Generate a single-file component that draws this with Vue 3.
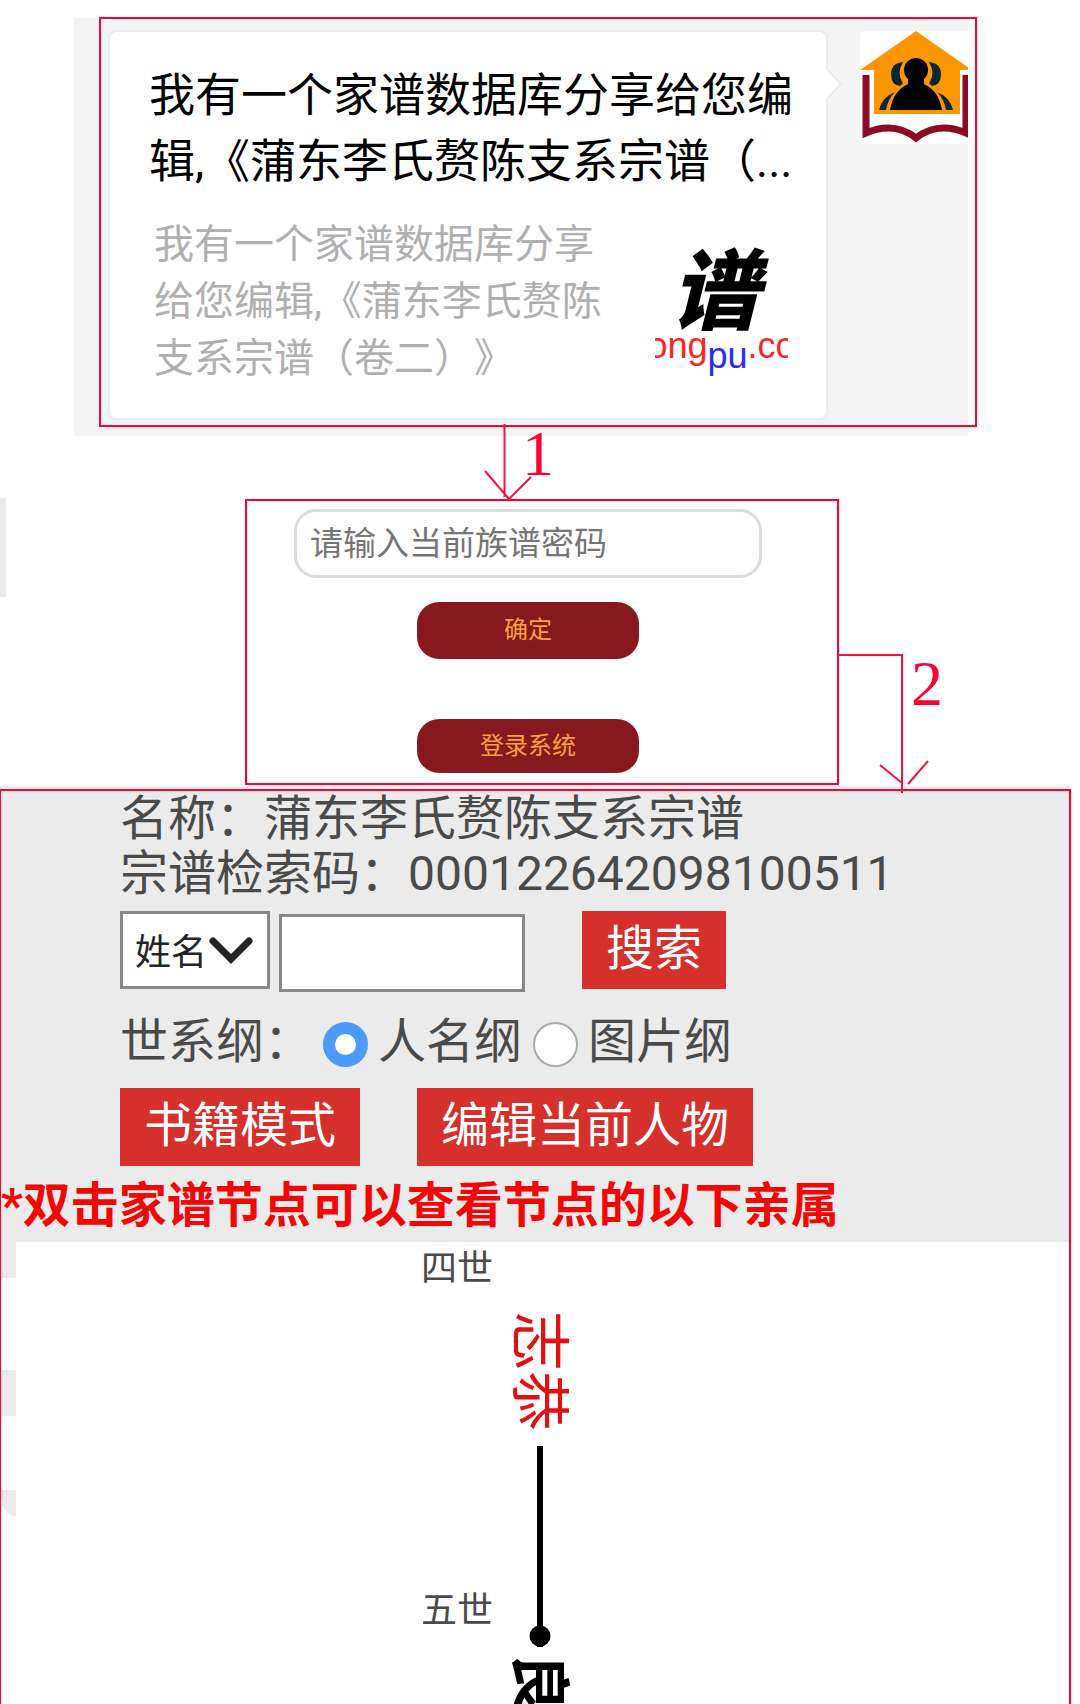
<script setup>
import { ref } from 'vue'

const password = ref('')
const field = ref('name')
const keyword = ref('')
const outline = ref('person')
</script>

<template>
  <main class="guide">
    <section class="chat">
      <article class="card">
        <h2 class="card-title">
          <span>我有一个家谱数据库分享给您编</span>
          <span>辑,《蒲东李氏赘陈支系宗谱（...</span>
        </h2>
        <div class="card-body">
          <p class="card-desc">
            <span>我有一个家谱数据库分享</span>
            <span>给您编辑,《蒲东李氏赘陈</span>
            <span>支系宗谱（卷二）》</span>
          </p>
          <div class="thumb">
            <span class="thumb-mark">谱</span>
            <span class="thumb-site"><span>ong</span><span class="low">pu</span><span>.co</span></span>
          </div>
        </div>
        <svg class="tail" width="18" height="32" viewBox="0 0 18 32"><path d="M0 1 L15 16 L0 31Z" fill="#fff" /><path d="M1 1 L15 16 L1 31" fill="none" stroke="#ececec" stroke-width="2" /></svg>
      </article>
      <svg class="avatar" width="108" height="113" viewBox="0 0 108 113">
        <rect width="120" height="113" rx="5" fill="#fff" />
        <path d="M6 44 V102 Q34 90 56 107 Q78 90 106 102 V44" fill="none" stroke="#8c0a26" stroke-width="7" />
        <path d="M56 0 L112 39 H100 V83 H14 V39 H0Z" fill="#fd9500" />
        <g fill="#0d2730">
          <path d="M43 31 Q31 32 31 43 Q31 54 40 55 L43 52 Q36 43 43 31Z" />
          <path d="M69 31 Q81 32 81 43 Q81 54 72 55 L69 52 Q76 43 69 31Z" />
          <path d="M19 79 Q22 66 35 61 Q28 68 26 79Z" />
          <path d="M93 79 Q90 66 77 61 Q84 68 86 79Z" />
        </g>
        <ellipse cx="56" cy="39" rx="12" ry="12" />
        <path d="M48 45 H64 V53 Q79 60 82 79 H30 Q33 60 48 53Z" />
      </svg>
      <div class="chat-frame"></div>
    </section>

    <section class="login">
      <input v-model="password" class="password" type="text" placeholder="请输入当前族谱密码" aria-label="请输入当前族谱密码">
      <button type="button" class="pill confirm">确定</button>
      <button type="button" class="pill enter">登录系统</button>
      <div class="step step-one">
        <svg width="50" height="77" viewBox="0 0 50 77"><path d="M20.500 1V74M1 48L25 76L47 54" fill="none" stroke="#f9103f" stroke-width="2" /></svg>
        <span>1</span>
      </div>
      <div class="step step-two">
        <svg width="90" height="141" viewBox="0 0 90 141"><path d="M0 2H63V140M41 112L63 130M69 131L89 108" fill="none" stroke="#f9103f" stroke-width="2" /></svg>
        <span>2</span>
      </div>
    </section>
    <i class="edge edge-login"></i>

    <section class="viewer">
      <div class="viewer-frame">
        <form class="panel" @submit.prevent>
          <div class="inner">
            <p class="info">名称：蒲东李氏赘陈支系宗谱</p>
            <p class="info">宗谱检索码：000122642098100511</p>
            <div class="search">
              <div class="picker">
                <select v-model="field" aria-label="检索字段">
                  <option value="name">姓名</option>
                </select>
                <svg width="44" height="28" viewBox="0 0 44 28"><path d="M4 4L22 22L40 4" fill="none" stroke="#242424" stroke-width="7" stroke-linecap="round" /></svg>
              </div>
              <input v-model="keyword" class="keyword" type="text" aria-label="检索内容">
              <button type="submit" class="action">搜索</button>
            </div>
            <div class="outline">
              <span class="outline-name">世系纲：</span>
              <label><input v-model="outline" type="radio" name="outline" value="person">人名纲</label>
              <label><input v-model="outline" type="radio" name="outline" value="image">图片纲</label>
            </div>
            <div class="actions">
              <button type="button" class="action">书籍模式</button>
              <button type="button" class="action">编辑当前人物</button>
            </div>
          </div>
          <p class="tip">*双击家谱节点可以查看节点的以下亲属</p>
        </form>
        <div class="tree">
          <i class="edge edge-a"></i>
          <i class="edge edge-b"></i>
          <i class="edge edge-c"></i>
          <span class="generation gen-four">四世</span>
          <span class="generation gen-five">五世</span>
          <span class="person selected">志恭</span>
          <svg class="link" width="24" height="202" viewBox="0 0 24 202"><path d="M12 0V201" stroke="#000" stroke-width="6" /><circle cx="12" cy="190" r="10.500" /></svg>
          <span class="person child">良</span>
        </div>
      </div>
    </section>
  </main>
</template>

<style>
body {
  margin: 0;
  background: #fff;
}
</style>

<style scoped>
* {
  box-sizing: border-box;
}

.guide {
  position: relative;
  display: flex;
  flex-direction: column;
  height: 100vh;
  min-height: 1500px;
  overflow: hidden;
  font-family: Roboto, "Noto Sans CJK SC", sans-serif;
  text-spacing-trim: space-all;
}

h2,
p {
  margin: 0;
}

input,
select,
button {
  font-family: inherit;
  margin: 0;
}

.chat {
  position: relative;
  flex: none;
  display: flex;
  align-items: flex-start;
  gap: 32px;
  margin: 18px 112px 0 74px;
  padding: 12px 0 16px 34px;
  background: #f4f4f4;
}

.card {
  position: relative;
  flex: 1;
  min-width: 0;
  padding: 30px 30px 31px 39px;
  background: #fff;
  border: 2px solid #ececec;
  border-radius: 8px;
}

.card-title {
  font-size: 46px;
  font-weight: 400;
  line-height: 66px;
  color: #000;
}

.card-title span,
.card-desc span {
  display: block;
  white-space: nowrap;
}

.card-body {
  display: flex;
  justify-content: space-between;
  margin-top: 22px;
  padding: 0 8px 0 5px;
}

.card-desc {
  font-size: 40px;
  line-height: 57px;
  color: #b0b0b0;
}

.thumb {
  display: flex;
  flex-direction: column;
  align-items: center;
  width: 133px;
  padding-top: 44px;
  overflow: hidden;
}

.thumb-mark {
  padding-right: 14px;
  font-size: 88px;
  font-weight: 900;
  font-style: italic;
  line-height: 66px;
}

.thumb-site {
  display: flex;
  justify-content: center;
  width: 133px;
  font: 36px/40px "Liberation Sans", sans-serif;
  color: #fb2626;
}

.thumb-site .low {
  padding-top: 10px;
  color: #2b2bfb;
}

.tail {
  position: absolute;
  top: 36px;
  right: -18px;
}

.avatar {
  flex: none;
  margin-top: 1px;
}

.chat-frame {
  position: absolute;
  inset: -1px -9px 9px 25px;
  border: 2px solid #ff0033;
}

.login {
  position: relative;
  flex: none;
  display: flex;
  flex-direction: column;
  align-items: center;
  margin: 63px 241px 0 245px;
  padding: 8px 28px 10px 0;
  border: 2px solid #ff0033;
}

.password {
  width: 468px;
  height: 69px;
  padding: 0 13px;
  font-size: 33px;
  color: #333;
  background: #fff;
  border: 3px solid #dcdcdc;
  border-radius: 22px;
}

.password::placeholder {
  color: #757575;
  opacity: 1;
}

.pill {
  width: 222px;
  padding: 0 0 6px;
  font-size: 24px;
  color: #f5a53c;
  background: #86181e;
  border: 0;
  border-radius: 22px;
}

.confirm {
  height: 57px;
  margin-top: 24px;
}

.enter {
  height: 54px;
  margin-top: 60px;
}

.step {
  position: absolute;
  display: flex;
  align-items: flex-start;
  font: 64px/62px "Liberation Serif", serif;
  color: #f9052f;
}

.step-one {
  top: -78px;
  left: 237px;
}

.step-one span {
  margin-left: -12px;
}

.step-two {
  top: 152px;
  left: 592px;
}

.step-two span {
  margin-left: -18px;
}

.edge {
  position: absolute;
  left: 0;
  width: 15px;
  background: #ebebeb;
}

.edge-login {
  top: 498px;
  width: 6px;
  height: 99px;
}

.edge-a {
  top: 0;
  height: 36px;
}

.edge-b {
  top: 128px;
  height: 46px;
}

.edge-c {
  top: 248px;
  height: 26px;
  border-bottom-left-radius: 14px 20px;
}

.viewer {
  flex: 1;
  display: flex;
  min-height: 0;
  margin: 1px 9px 0 0;
  padding-top: 3px;
  background: #ebebeb;
}

.viewer-frame {
  flex: 1;
  display: flex;
  flex-direction: column;
  min-width: 0;
  border: solid #ff0033;
  border-width: 2px 2px 0 1px;
}

.panel {
  flex: none;
  padding-bottom: 8px;
  color: #4a4a4a;
}

.inner {
  padding-left: 119px;
}

.info {
  font-size: 48px;
  line-height: 55px;
}

.search {
  display: flex;
  align-items: flex-start;
  margin-top: 10px;
}

.picker {
  position: relative;
}

.picker select {
  display: block;
  width: 150px;
  height: 78px;
  padding: 5px 0 0 12px;
  font-size: 36px;
  color: #242424;
  appearance: none;
  background: #fff;
  border: 3px solid #888;
  border-radius: 0;
}

.picker svg {
  position: absolute;
  top: 26px;
  right: 17px;
  pointer-events: none;
}

.keyword {
  width: 246px;
  height: 78px;
  margin: 3px 57px 0 9px;
  padding: 0 12px;
  font-size: 36px;
  background: #fff;
  border: 3px solid #888;
}

.action {
  height: 78px;
  padding: 0 24px 2px;
  font-size: 48px;
  line-height: 72px;
  color: #fff;
  background: #d5302c;
  border: 0;
}

.outline {
  display: flex;
  align-items: center;
  margin-top: 20px;
  font-size: 48px;
  line-height: 60px;
}

.outline-name {
  width: 203px;
}

.outline label {
  display: flex;
  align-items: center;
  gap: 10px;
  margin-right: 11px;
}

.outline input {
  width: 45px;
  height: 45px;
  margin-top: 4px;
  appearance: none;
  background: #fff;
  border: 2px solid #a9a9a9;
  border-radius: 50%;
}

.outline input:checked {
  border: 12px solid #4c9bfb;
}

.actions {
  display: flex;
  gap: 57px;
  margin-top: 16px;
}

.tip {
  margin-top: 12px;
  font-size: 48px;
  font-weight: 700;
  line-height: 56px;
  color: #f50505;
  white-space: nowrap;
}

.tree {
  position: relative;
  flex: 1;
  min-height: 0;
  overflow: hidden;
  background: #fff;
}

.generation {
  position: absolute;
  left: 420px;
  font-size: 36px;
  line-height: 40px;
  color: #4a4a4a;
}

.gen-four {
  top: 7px;
}

.gen-five {
  top: 349px;
}

.person {
  position: absolute;
  left: 507px;
  font-size: 60px;
  line-height: 60px;
  writing-mode: vertical-rl;
  text-orientation: sideways;
}

.selected {
  top: 69px;
  font-weight: 400;
  color: #e31212;
}

.link {
  position: absolute;
  top: 204px;
  left: 527px;
}

.child {
  top: 411px;
  font-weight: 700;
  color: #000;
}
</style>
